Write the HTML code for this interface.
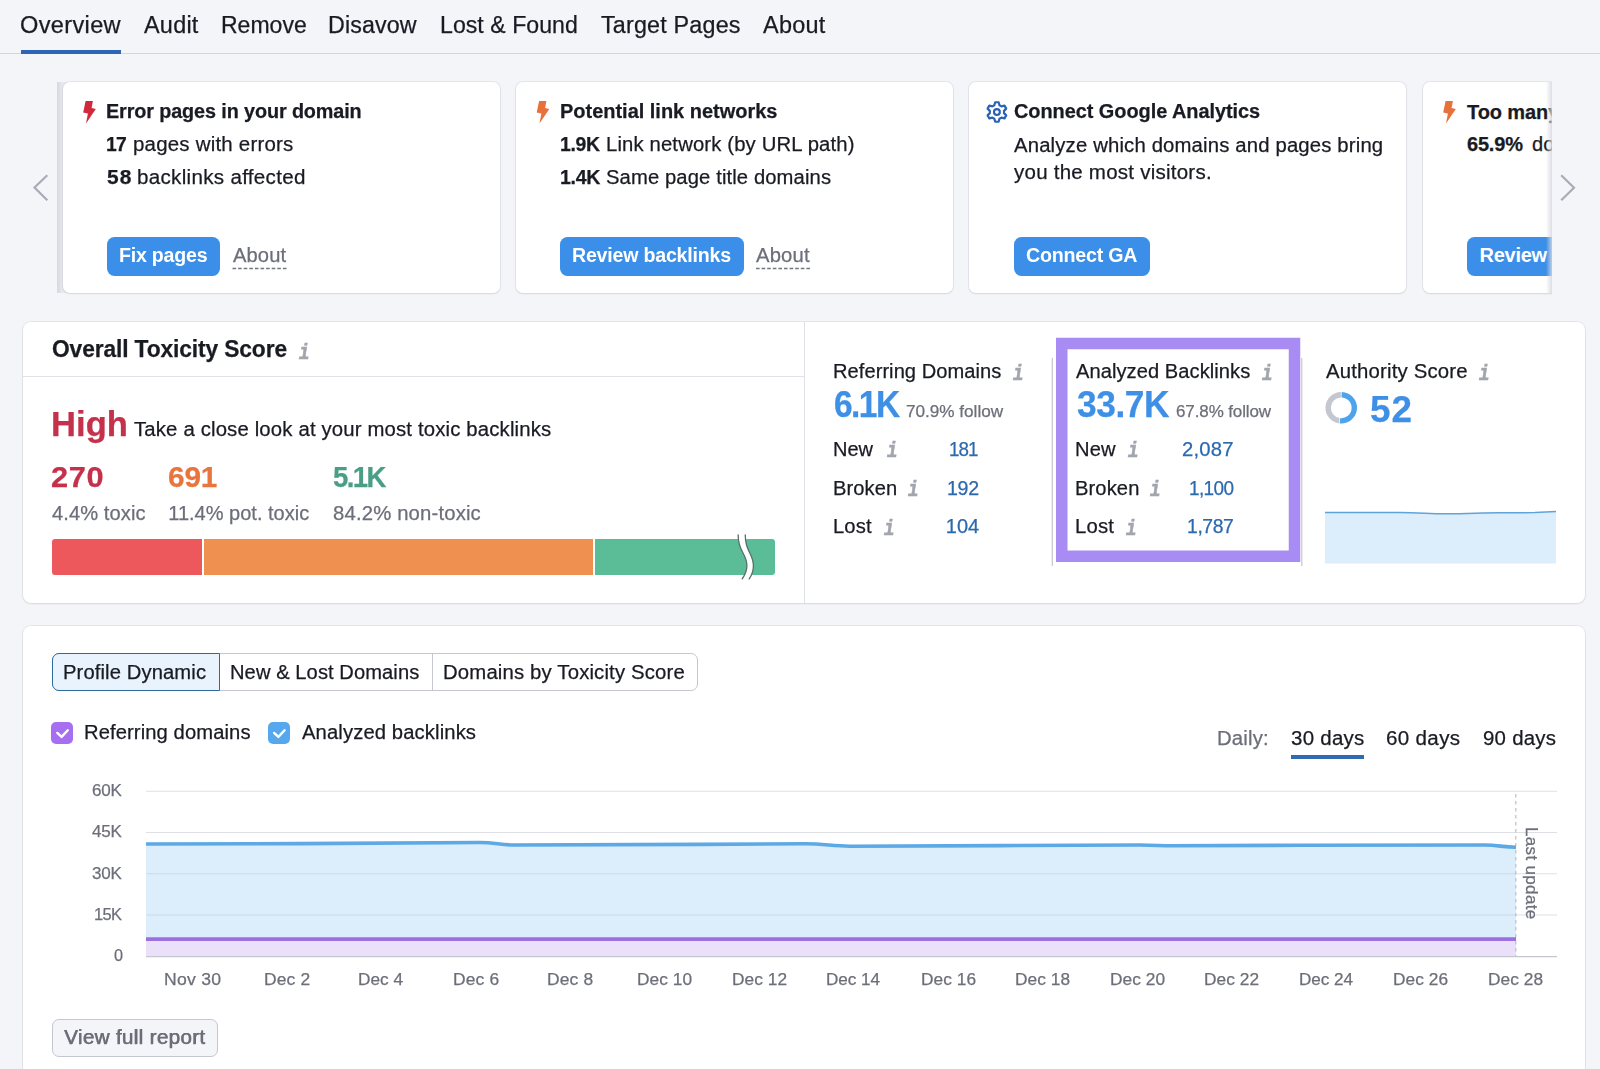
<!DOCTYPE html>
<html lang="en"><head><meta charset="utf-8"><title>Backlink Audit Overview</title>
<style>
html,body{margin:0;padding:0}
body{width:1600px;height:1069px;overflow:hidden;background:#f4f5f9;position:relative;font-family:"Liberation Sans",sans-serif;color:#191b23}
.t{position:absolute;white-space:nowrap;display:block;-webkit-text-stroke:0.25px}
.abs{position:absolute}
.card{position:absolute;top:82px;height:210.5px;width:437px;background:#fff;border-radius:7px;box-shadow:0 0 0 1px rgba(196,199,208,.30),0 1px 2px rgba(25,27,35,.09)}
.btn{position:absolute;top:237px;height:38.5px;background:#3c8fe8;border-radius:7.5px}
.panel{position:absolute;left:23px;width:1562px;background:#fff;border-radius:8px;box-shadow:0 0 0 1px rgba(196,199,208,.32),0 1px 2px rgba(25,27,35,.09)}
</style></head><body>
<!-- NAV -->
<div class="abs" style="left:0;top:52.5px;width:1600px;height:1.5px;background:#d3d6de"></div>
<div class="abs" style="left:21px;top:50px;width:100px;height:3.5px;background:#2b67b6"></div>

<!-- CAROUSEL -->
<svg class="abs" style="left:0;top:0" width="1600" height="320" viewBox="0 0 1600 320">
  <path d="M46.5 176 L34.5 187.5 L46.5 199.5" fill="none" stroke="#a9abb6" stroke-width="2.2" stroke-linecap="square"/>
  <path d="M1562 176 L1574 187.8 L1562 199.5" fill="none" stroke="#a9abb6" stroke-width="2.2" stroke-linecap="square"/>
</svg>
<div class="abs" id="clip" style="left:57px;top:70px;width:1495px;height:240px;overflow:hidden">
 <div class="abs" style="left:-57px;top:-70px;width:1600px;height:320px">
  <div class="abs" style="left:57px;top:82px;width:12px;height:211px;background:linear-gradient(90deg,#d6d8e0,#e9eaef 6px)"></div>
  <div class="card" style="left:62.5px"></div>
  <div class="card" style="left:516px"></div>
  <div class="card" style="left:969px"></div>
  <div class="card" style="left:1422.5px"></div>
  <div class="btn" style="left:107px;width:113px"></div>
  <div class="btn" style="left:560px;width:184px"></div>
  <div class="btn" style="left:1013.5px;width:136.5px"></div>
  <div class="btn" style="left:1467px;width:184px"></div>
  <svg class="abs" style="left:0;top:0" width="1600" height="320" viewBox="0 0 1600 320">
    <polygon points="85.6,101.1 92.9,101.1 91.6,108 95.8,109.1 86,123.4 87.9,113.6 83.2,112.5" fill="#d1283c"/>
    <polygon transform="translate(453.5 0)" points="85.6,101.1 92.9,101.1 91.6,108 95.8,109.1 86,123.4 87.9,113.6 83.2,112.5" fill="#e8703a"/>
    <polygon transform="translate(1360 0)" points="85.6,101.1 92.9,101.1 91.6,108 95.8,109.1 86,123.4 87.9,113.6 83.2,112.5" fill="#e8703a"/>
    <g transform="translate(996.9 112)" fill="none" stroke="#2a62b5" stroke-width="2.2" stroke-linejoin="round">
      <circle r="2.9"/>
      <path d="M-1.72 -9.75 L1.72 -9.75 L2.58 -6.72 L4.53 -5.60 L7.58 -6.36 L9.30 -3.39 L7.11 -1.13 L7.11 1.13 L9.30 3.39 L7.58 6.36 L4.53 5.60 L2.58 6.72 L1.72 9.75 L-1.72 9.75 L-2.58 6.72 L-4.53 5.60 L-7.58 6.36 L-9.30 3.39 L-7.11 1.13 L-7.11 -1.13 L-9.30 -3.39 L-7.58 -6.36 L-4.53 -5.60 L-2.58 -6.72 Z"/>
    </g>
    <line x1="232.5" x2="286.5" y1="268.5" y2="268.5" stroke="#74767f" stroke-width="1.5" stroke-dasharray="3.6 2"/>
    <line x1="756" x2="810.5" y1="268.5" y2="268.5" stroke="#74767f" stroke-width="1.5" stroke-dasharray="3.6 2"/>
  </svg>
  <span class="t" style="left:1467px;top:102px;font-size:20px;line-height:20px;font-weight:700;letter-spacing:-0.1px">Too many follow backlinks</span>
  <span class="t" style="left:1467px;top:134px;font-size:20px;line-height:20px;font-weight:700;letter-spacing:-0.2px">65.9%</span>
  <span class="t" style="left:1532px;top:134px;font-size:20px;line-height:20px;letter-spacing:0.1px">dofollow links</span>
  <span class="t" style="left:1479.5px;top:245px;font-size:20px;line-height:20px;font-weight:700;color:#fff;letter-spacing:-0.25px;-webkit-text-stroke:0">Review backlinks</span>
  <div class="abs" style="left:1546px;top:82px;width:6px;height:211px;background:linear-gradient(90deg,rgba(220,222,229,0),rgba(214,216,224,.85))"></div>
 </div>
</div>

<!-- PANEL 2 -->
<div class="panel" style="top:321.5px;height:281px"></div>
<div class="abs" style="left:23px;top:376px;width:782px;height:1.3px;background:#e0e2e8"></div>
<div class="abs" style="left:804.2px;top:322px;width:1.3px;height:281px;background:#e0e2e8"></div>
<div class="abs" style="left:51.75px;top:538.75px;width:150.5px;height:35.75px;background:#ed585c;border-radius:3px 0 0 3px"></div>
<div class="abs" style="left:203.75px;top:538.75px;width:389.6px;height:35.75px;background:#ef9050"></div>
<div class="abs" style="left:595.3px;top:538.75px;width:179.7px;height:35.75px;background:#5bbd98;border-radius:0 3px 3px 0"></div>
<svg class="abs" style="left:0;top:0" width="1600" height="1069" viewBox="0 0 1600 1069">
  <!-- wavy break -->
  <path d="M738.2 534 L738.2 536 C738.2 552 746.9 553 746.9 566 C746.9 571.5 744.6 575.4 742.2 579.2 L749.2 579.2 C751.6 575.4 753.4 571.5 753.4 566 C753.4 553 745.3 552 745.3 536 L745.3 534 Z" fill="#fff"/>
  <path d="M738.2 534.8 L738.2 536 C738.2 552 746.9 553 746.9 566 C746.9 571.5 744.6 575.4 742.2 578.9" fill="none" stroke="#56706a" stroke-width="1.3" stroke-linecap="round"/>
  <path d="M745.3 534.8 L745.3 536 C745.3 552 753.4 553 753.4 566 C753.4 571.5 751.6 575.4 749.2 578.9" fill="none" stroke="#56706a" stroke-width="1.3" stroke-linecap="round"/>
  <!-- dividers -->
  <line x1="1052.3" x2="1052.3" y1="358" y2="566" stroke="#c4c7cf" stroke-width="1.2"/>
  <line x1="1301.8" x2="1301.8" y1="358" y2="566" stroke="#c4c7cf" stroke-width="1.2"/>
  <!-- purple highlight -->
  <rect x="1061.75" y="343.5" width="232.75" height="212.75" fill="none" stroke="#a98cf3" stroke-width="11.5"/>
  <!-- donut -->
  <g transform="translate(1341.3 407.8)" fill="none" stroke-width="5.4">
    <path d="M0.34 -13.10 A13.1 13.1 0 1 1 -1.37 13.03" stroke="#4da3ec"/>
    <path d="M-2.16 12.92 A13.1 13.1 0 0 1 -0.34 -13.10" stroke="#c4c7cf"/>
  </g>
  <!-- sparkline -->
  <path d="M1325 512.6 L1400 512.6 C1420 512.8 1430 513.8 1445 513.8 C1470 513.8 1480 512.8 1500 512.8 L1535 512.6 L1556 511.6 L1556 563.5 L1325 563.5 Z" fill="#dceefc"/>
  <path d="M1325 512.6 L1400 512.6 C1420 512.8 1430 513.8 1445 513.8 C1470 513.8 1480 512.8 1500 512.8 L1535 512.6 L1556 511.6" fill="none" stroke="#5fa3db" stroke-width="1.5"/>
</svg>

<!-- PANEL 3 -->
<div class="panel" style="top:625.5px;height:460px"></div>
<div class="abs" style="left:51.5px;top:653px;width:646px;height:38px;box-sizing:border-box;border:1.3px solid #c4c7cf;border-radius:7px;background:#fff"></div>
<div class="abs" style="left:431.5px;top:653px;width:1.3px;height:38px;background:#c4c7cf"></div>
<div class="abs" style="left:51.5px;top:653px;width:168px;height:38px;box-sizing:border-box;border:1.7px solid #2c6c9c;border-radius:7px 0 0 7px;background:#e9f3fd"></div>
<div class="abs" style="left:51.25px;top:722px;width:22px;height:22px;border-radius:5px;background:#a56ff0"></div>
<div class="abs" style="left:268px;top:722px;width:22px;height:22px;border-radius:5px;background:#55a8ee"></div>
<div class="abs" style="left:1290.5px;top:755px;width:73.5px;height:4.2px;background:#2e6bb0"></div>
<div class="abs" style="left:51.5px;top:1019px;width:166.5px;height:38px;box-sizing:border-box;border:1.3px solid #c4c7cf;border-radius:7px;background:#f4f5f9"></div>
<svg class="abs" style="left:0;top:0" width="1600" height="1069" viewBox="0 0 1600 1069">
  <path d="M57.3 732.9 L61.6 736.9 L67.8 730.3" fill="none" stroke="#fff" stroke-width="2.4" stroke-linecap="round" stroke-linejoin="round"/>
  <path d="M274.1 732.9 L278.4 736.9 L284.6 730.3" fill="none" stroke="#fff" stroke-width="2.4" stroke-linecap="round" stroke-linejoin="round"/>
  <!-- areas -->
  <path d="M146 844 L300 843.6 L480 842.5 C495 842.5 500 845 514 845 L700 844.4 L805 843.8 C825 843.8 832 846.2 850 846.2 L1000 845.6 L1140 845 C1155 845 1160 845.8 1172 845.8 L1300 845.2 L1485 845 C1498 845 1503 847.2 1516 847.2 L1516 956.3 L146 956.3 Z" fill="#dcedfc"/>
  <path d="M146 939.2 L1516 939.2 L1516 956.3 L146 956.3 Z" fill="#ebe0fa"/>
  <!-- grid -->
  <g stroke="#c9ccd4" stroke-opacity=".6" stroke-width="1.2">
    <line x1="146" x2="1557" y1="791.25" y2="791.25"/>
    <line x1="146" x2="1557" y1="832.5" y2="832.5"/>
    <line x1="146" x2="1557" y1="873.75" y2="873.75"/>
    <line x1="146" x2="1557" y1="915" y2="915"/>
  </g>
  <line x1="146" x2="1557" y1="956.6" y2="956.6" stroke="#c4c7cf" stroke-width="1.4"/>
  <line x1="1515.8" x2="1515.8" y1="794" y2="956" stroke="#bcbfc8" stroke-width="1.2" stroke-dasharray="3.5 3.5"/>
  <path d="M146 844 L300 843.6 L480 842.5 C495 842.5 500 845 514 845 L700 844.4 L805 843.8 C825 843.8 832 846.2 850 846.2 L1000 845.6 L1140 845 C1155 845 1160 845.8 1172 845.8 L1300 845.2 L1485 845 C1498 845 1503 847.2 1516 847.2" fill="none" stroke="#5ca9e6" stroke-width="3.6"/>
  <path d="M146 939.2 L1516 939.2" fill="none" stroke="#9c70e0" stroke-width="3.8"/>
</svg>

<div id="texts" style="will-change:transform">
<span class="t" style="left:19.98px;top:14.00px;font-size:23px;line-height:23px;letter-spacing:0.336px;transform-origin:0 0;transform:scaleX(1.0247);">Overview</span>
<span class="t" style="left:144.00px;top:14.00px;font-size:23px;line-height:23px;letter-spacing:0.244px;transform-origin:0 0;transform:scaleX(1.0184);">Audit</span>
<span class="t" style="left:221.00px;top:14.00px;font-size:23px;line-height:23px;letter-spacing:0.015px;">Remove</span>
<span class="t" style="left:327.99px;top:14.00px;font-size:23px;line-height:23px;letter-spacing:0.141px;transform-origin:0 0;transform:scaleX(1.0098);">Disavow</span>
<span class="t" style="left:440.00px;top:14.00px;font-size:23px;line-height:23px;letter-spacing:0.045px;transform-origin:0 0;transform:scaleX(1.0036);">Lost &amp; Found</span>
<span class="t" style="left:601.00px;top:14.00px;font-size:23px;line-height:23px;letter-spacing:0.179px;transform-origin:0 0;transform:scaleX(1.0146);">Target Pages</span>
<span class="t" style="left:763.00px;top:14.00px;font-size:23px;line-height:23px;letter-spacing:0.283px;transform-origin:0 0;transform:scaleX(1.0186);">About</span>
<span class="t" style="left:106.01px;top:101.00px;font-size:20px;line-height:20px;font-weight:700;letter-spacing:-0.109px;transform-origin:0 0;transform:scaleX(0.9894);">Error pages in your domain</span>
<span class="t" style="left:106.03px;top:134.00px;font-size:20px;line-height:20px;font-weight:700;letter-spacing:-0.698px;transform-origin:0 0;transform:scaleX(0.9670);">17</span>
<span class="t" style="left:132.73px;top:134.00px;font-size:20px;line-height:20px;letter-spacing:0.212px;transform-origin:0 0;transform:scaleX(1.0222);">pages with errors</span>
<span class="t" style="left:107.00px;top:167.00px;font-size:20px;line-height:20px;font-weight:700;letter-spacing:1.039px;transform-origin:0 0;transform:scaleX(1.0470);">58</span>
<span class="t" style="left:137.22px;top:167.00px;font-size:20px;line-height:20px;letter-spacing:0.283px;transform-origin:0 0;transform:scaleX(1.0307);">backlinks affected</span>
<span class="t" style="left:118.52px;top:245.00px;font-size:20px;line-height:20px;font-weight:700;color:#fff;letter-spacing:-0.229px;transform-origin:0 0;transform:scaleX(0.9799);-webkit-text-stroke:0;">Fix pages</span>
<span class="t" style="left:232.50px;top:245.00px;font-size:20px;line-height:20px;color:#6c6e79;letter-spacing:0.099px;transform-origin:0 0;transform:scaleX(1.0075);">About</span>
<span class="t" style="left:559.50px;top:101.00px;font-size:20px;line-height:20px;font-weight:700;letter-spacing:-0.010px;transform-origin:0 0;transform:scaleX(0.9990);">Potential link networks</span>
<span class="t" style="left:559.53px;top:134.00px;font-size:20px;line-height:20px;font-weight:700;letter-spacing:-0.389px;transform-origin:0 0;transform:scaleX(0.9721);">1.9K</span>
<span class="t" style="left:605.99px;top:134.00px;font-size:20px;line-height:20px;letter-spacing:0.136px;transform-origin:0 0;transform:scaleX(1.0141);">Link network (by URL path)</span>
<span class="t" style="left:559.52px;top:167.00px;font-size:20px;line-height:20px;font-weight:700;letter-spacing:-0.304px;transform-origin:0 0;transform:scaleX(0.9782);">1.4K</span>
<span class="t" style="left:606.30px;top:167.00px;font-size:20px;line-height:20px;letter-spacing:0.110px;transform-origin:0 0;transform:scaleX(1.0110);">Same page title domains</span>
<span class="t" style="left:572.02px;top:245.00px;font-size:20px;line-height:20px;font-weight:700;color:#fff;letter-spacing:-0.220px;transform-origin:0 0;transform:scaleX(0.9800);-webkit-text-stroke:0;">Review backlinks</span>
<span class="t" style="left:756.00px;top:245.00px;font-size:20px;line-height:20px;color:#6c6e79;letter-spacing:0.160px;transform-origin:0 0;transform:scaleX(1.0122);">About</span>
<span class="t" style="left:1014.00px;top:101.00px;font-size:20px;line-height:20px;font-weight:700;letter-spacing:-0.045px;transform-origin:0 0;transform:scaleX(0.9959);">Connect Google Analytics</span>
<span class="t" style="left:1014.00px;top:135.00px;font-size:20px;line-height:20px;letter-spacing:0.153px;transform-origin:0 0;transform:scaleX(1.0155);">Analyze which domains and pages bring</span>
<span class="t" style="left:1014.00px;top:162.00px;font-size:20px;line-height:20px;letter-spacing:0.228px;transform-origin:0 0;transform:scaleX(1.0257);">you the most visitors.</span>
<span class="t" style="left:1026.00px;top:245.00px;font-size:20px;line-height:20px;font-weight:700;color:#fff;letter-spacing:-0.231px;transform-origin:0 0;transform:scaleX(0.9820);-webkit-text-stroke:0;">Connect GA</span>
<span class="t" style="left:52.00px;top:338.00px;font-size:23px;line-height:23px;font-weight:700;letter-spacing:-0.116px;transform-origin:0 0;transform:scaleX(0.9898);">Overall Toxicity Score</span>
<span class="t" style="left:51.00px;top:407.00px;font-size:34.5px;line-height:34.5px;font-weight:700;color:#c5304a;letter-spacing:0.038px;transform-origin:0 0;transform:scaleX(1.0016);">High</span>
<span class="t" style="left:133.75px;top:419.00px;font-size:20px;line-height:20px;letter-spacing:0.151px;transform-origin:0 0;transform:scaleX(1.0169);">Take a close look at your most toxic backlinks</span>
<span class="t" style="left:50.97px;top:462.00px;font-size:30px;line-height:30px;font-weight:700;color:#c5304a;letter-spacing:0.649px;transform-origin:0 0;transform:scaleX(1.0268);">270</span>
<span class="t" style="left:168.26px;top:462.00px;font-size:30px;line-height:30px;font-weight:700;color:#e8743e;letter-spacing:-0.155px;transform-origin:0 0;transform:scaleX(0.9936);">691</span>
<span class="t" style="left:333.25px;top:462.00px;font-size:30px;line-height:30px;font-weight:700;color:#4a9e85;letter-spacing:-1.729px;transform-origin:0 0;transform:scaleX(0.9186);">5.1K</span>
<span class="t" style="left:52.00px;top:503.00px;font-size:20px;line-height:20px;color:#6c6e79;letter-spacing:0.068px;transform-origin:0 0;transform:scaleX(1.0067);">4.4% toxic</span>
<span class="t" style="left:168.25px;top:503.00px;font-size:20px;line-height:20px;color:#6c6e79;letter-spacing:0.006px;">11.4% pot. toxic</span>
<span class="t" style="left:333.25px;top:503.00px;font-size:20px;line-height:20px;color:#6c6e79;letter-spacing:0.154px;transform-origin:0 0;transform:scaleX(1.0150);">84.2% non-toxic</span>
<span class="t" style="left:833.00px;top:361.00px;font-size:20px;line-height:20px;letter-spacing:0.049px;transform-origin:0 0;transform:scaleX(1.0047);">Referring Domains</span>
<span class="t" style="left:833.67px;top:387.00px;font-size:36px;line-height:36px;font-weight:700;color:#3e8fe6;letter-spacing:-1.681px;transform-origin:0 0;transform:scaleX(0.9328);">6.1K</span>
<span class="t" style="left:906.30px;top:403.00px;font-size:17.2px;line-height:17.2px;color:#6c6e79;letter-spacing:-0.015px;transform-origin:0 0;transform:scaleX(0.9983);">70.9% follow</span>
<span class="t" style="left:833.00px;top:439.00px;font-size:20px;line-height:20px;letter-spacing:0.008px;">New</span>
<span class="t" style="left:949.36px;top:439.00px;font-size:20px;line-height:20px;color:#2c69ae;letter-spacing:-0.965px;transform-origin:0 0;transform:scaleX(0.9401);">181</span>
<span class="t" style="left:832.99px;top:478.00px;font-size:20px;line-height:20px;letter-spacing:0.075px;transform-origin:0 0;transform:scaleX(1.0061);">Broken</span>
<span class="t" style="left:947.02px;top:478.00px;font-size:20px;line-height:20px;color:#2c69ae;letter-spacing:-0.315px;transform-origin:0 0;transform:scaleX(0.9805);">192</span>
<span class="t" style="left:832.99px;top:516.00px;font-size:20px;line-height:20px;letter-spacing:0.125px;transform-origin:0 0;transform:scaleX(1.0101);">Lost</span>
<span class="t" style="left:945.80px;top:516.00px;font-size:20px;line-height:20px;color:#2c69ae;letter-spacing:-0.012px;">104</span>
<span class="t" style="left:1076.20px;top:361.00px;font-size:20px;line-height:20px;letter-spacing:0.056px;transform-origin:0 0;transform:scaleX(1.0055);">Analyzed Backlinks</span>
<span class="t" style="left:1076.60px;top:387.00px;font-size:36px;line-height:36px;font-weight:700;color:#3e8fe6;letter-spacing:-0.437px;transform-origin:0 0;transform:scaleX(0.9818);">33.7K</span>
<span class="t" style="left:1176.30px;top:403.00px;font-size:17.2px;line-height:17.2px;color:#6c6e79;letter-spacing:-0.107px;transform-origin:0 0;transform:scaleX(0.9880);">67.8% follow</span>
<span class="t" style="left:1074.99px;top:439.00px;font-size:20px;line-height:20px;letter-spacing:0.108px;transform-origin:0 0;transform:scaleX(1.0055);">New</span>
<span class="t" style="left:1182.29px;top:439.00px;font-size:20px;line-height:20px;color:#2c69ae;letter-spacing:0.171px;transform-origin:0 0;transform:scaleX(1.0139);">2,087</span>
<span class="t" style="left:1074.99px;top:478.00px;font-size:20px;line-height:20px;letter-spacing:0.095px;transform-origin:0 0;transform:scaleX(1.0078);">Broken</span>
<span class="t" style="left:1188.65px;top:478.00px;font-size:20px;line-height:20px;color:#2c69ae;letter-spacing:-0.632px;transform-origin:0 0;transform:scaleX(0.9483);">1,100</span>
<span class="t" style="left:1074.98px;top:516.00px;font-size:20px;line-height:20px;letter-spacing:0.191px;transform-origin:0 0;transform:scaleX(1.0154);">Lost</span>
<span class="t" style="left:1186.83px;top:516.00px;font-size:20px;line-height:20px;color:#2c69ae;letter-spacing:-0.397px;transform-origin:0 0;transform:scaleX(0.9675);">1,787</span>
<span class="t" style="left:1325.70px;top:361.00px;font-size:20px;line-height:20px;letter-spacing:0.173px;transform-origin:0 0;transform:scaleX(1.0178);">Authority Score</span>
<span class="t" style="left:1369.78px;top:392.00px;font-size:36px;line-height:36px;font-weight:700;color:#3e8fe6;letter-spacing:0.879px;transform-origin:0 0;transform:scaleX(1.0231);">52</span>
<span class="t" style="left:63.24px;top:662.00px;font-size:20px;line-height:20px;letter-spacing:0.105px;transform-origin:0 0;transform:scaleX(1.0106);">Profile Dynamic</span>
<span class="t" style="left:230.24px;top:662.00px;font-size:20px;line-height:20px;letter-spacing:0.074px;transform-origin:0 0;transform:scaleX(1.0067);">New &amp; Lost Domains</span>
<span class="t" style="left:442.98px;top:662.00px;font-size:20px;line-height:20px;letter-spacing:0.157px;transform-origin:0 0;transform:scaleX(1.0162);">Domains by Toxicity Score</span>
<span class="t" style="left:83.99px;top:722.00px;font-size:20px;line-height:20px;letter-spacing:0.096px;transform-origin:0 0;transform:scaleX(1.0095);">Referring domains</span>
<span class="t" style="left:302.00px;top:722.00px;font-size:20px;line-height:20px;letter-spacing:0.114px;transform-origin:0 0;transform:scaleX(1.0114);">Analyzed backlinks</span>
<span class="t" style="left:1216.98px;top:728.00px;font-size:20px;line-height:20px;color:#6c6e79;letter-spacing:0.153px;transform-origin:0 0;transform:scaleX(1.0162);">Daily:</span>
<span class="t" style="left:1290.50px;top:728.00px;font-size:20px;line-height:20px;letter-spacing:0.264px;transform-origin:0 0;transform:scaleX(1.0226);">30 days</span>
<span class="t" style="left:1385.97px;top:728.00px;font-size:20px;line-height:20px;letter-spacing:0.325px;transform-origin:0 0;transform:scaleX(1.0282);">60 days</span>
<span class="t" style="left:1483.25px;top:728.00px;font-size:20px;line-height:20px;letter-spacing:0.243px;transform-origin:0 0;transform:scaleX(1.0208);">90 days</span>
<span class="t" style="left:92.25px;top:782.00px;font-size:17.2px;line-height:17.2px;color:#6c6e79;letter-spacing:-0.155px;transform-origin:0 0;transform:scaleX(0.9900);">60K</span>
<span class="t" style="left:92.25px;top:823.00px;font-size:17.2px;line-height:17.2px;color:#6c6e79;letter-spacing:-0.155px;transform-origin:0 0;transform:scaleX(0.9900);">45K</span>
<span class="t" style="left:92.25px;top:865.00px;font-size:17.2px;line-height:17.2px;color:#6c6e79;letter-spacing:-0.155px;transform-origin:0 0;transform:scaleX(0.9900);">30K</span>
<span class="t" style="left:94.29px;top:906.00px;font-size:17.2px;line-height:17.2px;color:#6c6e79;letter-spacing:-0.669px;transform-origin:0 0;transform:scaleX(0.9556);">15K</span>
<span class="t" style="left:114.25px;top:947.00px;font-size:17.2px;line-height:17.2px;color:#6c6e79;transform-origin:0 0;transform:scaleX(0.9444);">0</span>
<span class="t" style="left:163.83px;top:971.00px;font-size:17.2px;line-height:17.2px;color:#6c6e79;letter-spacing:0.257px;transform-origin:0 0;transform:scaleX(1.0243);">Nov 30</span>
<span class="t" style="left:263.84px;top:971.00px;font-size:17.2px;line-height:17.2px;color:#6c6e79;letter-spacing:0.144px;transform-origin:0 0;transform:scaleX(1.0133);">Dec 2</span>
<span class="t" style="left:358.35px;top:971.00px;font-size:17.2px;line-height:17.2px;color:#6c6e79;letter-spacing:0.020px;transform-origin:0 0;transform:scaleX(1.0018);">Dec 4</span>
<span class="t" style="left:452.84px;top:971.00px;font-size:17.2px;line-height:17.2px;color:#6c6e79;letter-spacing:0.144px;transform-origin:0 0;transform:scaleX(1.0133);">Dec 6</span>
<span class="t" style="left:547.34px;top:971.00px;font-size:17.2px;line-height:17.2px;color:#6c6e79;letter-spacing:0.144px;transform-origin:0 0;transform:scaleX(1.0133);">Dec 8</span>
<span class="t" style="left:637.34px;top:971.00px;font-size:17.2px;line-height:17.2px;color:#6c6e79;letter-spacing:0.060px;transform-origin:0 0;transform:scaleX(1.0057);">Dec 10</span>
<span class="t" style="left:731.84px;top:971.00px;font-size:17.2px;line-height:17.2px;color:#6c6e79;letter-spacing:0.060px;transform-origin:0 0;transform:scaleX(1.0057);">Dec 12</span>
<span class="t" style="left:826.35px;top:971.00px;font-size:17.2px;line-height:17.2px;color:#6c6e79;letter-spacing:-0.040px;transform-origin:0 0;transform:scaleX(0.9963);">Dec 14</span>
<span class="t" style="left:920.84px;top:971.00px;font-size:17.2px;line-height:17.2px;color:#6c6e79;letter-spacing:0.060px;transform-origin:0 0;transform:scaleX(1.0057);">Dec 16</span>
<span class="t" style="left:1015.34px;top:971.00px;font-size:17.2px;line-height:17.2px;color:#6c6e79;letter-spacing:0.060px;transform-origin:0 0;transform:scaleX(1.0057);">Dec 18</span>
<span class="t" style="left:1109.84px;top:971.00px;font-size:17.2px;line-height:17.2px;color:#6c6e79;letter-spacing:0.060px;transform-origin:0 0;transform:scaleX(1.0057);">Dec 20</span>
<span class="t" style="left:1204.34px;top:971.00px;font-size:17.2px;line-height:17.2px;color:#6c6e79;letter-spacing:0.060px;transform-origin:0 0;transform:scaleX(1.0057);">Dec 22</span>
<span class="t" style="left:1298.85px;top:971.00px;font-size:17.2px;line-height:17.2px;color:#6c6e79;letter-spacing:-0.040px;transform-origin:0 0;transform:scaleX(0.9963);">Dec 24</span>
<span class="t" style="left:1393.34px;top:971.00px;font-size:17.2px;line-height:17.2px;color:#6c6e79;letter-spacing:0.060px;transform-origin:0 0;transform:scaleX(1.0057);">Dec 26</span>
<span class="t" style="left:1487.84px;top:971.00px;font-size:17.2px;line-height:17.2px;color:#6c6e79;letter-spacing:0.060px;transform-origin:0 0;transform:scaleX(1.0057);">Dec 28</span>
<span class="t" style="left:64.00px;top:1027.00px;font-size:20px;line-height:20px;color:#6c6e79;letter-spacing:0.300px;transform-origin:0 0;transform:scaleX(1.0340);text-shadow:0.5px 0 0 #6c6e79;">View full report</span>
<span class="t" style="left:1540.00px;top:827.27px;font-size:16.5px;line-height:16.5px;color:#6c6e79;letter-spacing:0.292px;transform-origin:0 0;transform:rotate(90deg) scaleX(1.0343);">Last update</span>
<span class="t" style="left:298.71px;top:343.00px;font-size:22px;line-height:22px;font-weight:700;color:#a3a5ae;font-family:'Liberation Mono',monospace;transform-origin:0 0;transform:scaleX(0.7917);font-style:italic;-webkit-text-stroke:0.7px #a3a5ae;">i</span>
<span class="t" style="left:1012.71px;top:364.00px;font-size:22px;line-height:22px;font-weight:700;color:#a3a5ae;font-family:'Liberation Mono',monospace;transform-origin:0 0;transform:scaleX(0.7917);font-style:italic;-webkit-text-stroke:0.7px #a3a5ae;">i</span>
<span class="t" style="left:886.61px;top:441.00px;font-size:22px;line-height:22px;font-weight:700;color:#a3a5ae;font-family:'Liberation Mono',monospace;transform-origin:0 0;transform:scaleX(0.7917);font-style:italic;-webkit-text-stroke:0.7px #a3a5ae;">i</span>
<span class="t" style="left:908.11px;top:480.00px;font-size:22px;line-height:22px;font-weight:700;color:#a3a5ae;font-family:'Liberation Mono',monospace;transform-origin:0 0;transform:scaleX(0.7917);font-style:italic;-webkit-text-stroke:0.7px #a3a5ae;">i</span>
<span class="t" style="left:884.01px;top:519.00px;font-size:22px;line-height:22px;font-weight:700;color:#a3a5ae;font-family:'Liberation Mono',monospace;transform-origin:0 0;transform:scaleX(0.7917);font-style:italic;-webkit-text-stroke:0.7px #a3a5ae;">i</span>
<span class="t" style="left:1262.01px;top:364.00px;font-size:22px;line-height:22px;font-weight:700;color:#a3a5ae;font-family:'Liberation Mono',monospace;transform-origin:0 0;transform:scaleX(0.7917);font-style:italic;-webkit-text-stroke:0.7px #a3a5ae;">i</span>
<span class="t" style="left:1128.21px;top:441.00px;font-size:22px;line-height:22px;font-weight:700;color:#a3a5ae;font-family:'Liberation Mono',monospace;transform-origin:0 0;transform:scaleX(0.7917);font-style:italic;-webkit-text-stroke:0.7px #a3a5ae;">i</span>
<span class="t" style="left:1150.21px;top:480.00px;font-size:22px;line-height:22px;font-weight:700;color:#a3a5ae;font-family:'Liberation Mono',monospace;transform-origin:0 0;transform:scaleX(0.7917);font-style:italic;-webkit-text-stroke:0.7px #a3a5ae;">i</span>
<span class="t" style="left:1126.41px;top:519.00px;font-size:22px;line-height:22px;font-weight:700;color:#a3a5ae;font-family:'Liberation Mono',monospace;transform-origin:0 0;transform:scaleX(0.7917);font-style:italic;-webkit-text-stroke:0.7px #a3a5ae;">i</span>
<span class="t" style="left:1479.41px;top:364.00px;font-size:22px;line-height:22px;font-weight:700;color:#a3a5ae;font-family:'Liberation Mono',monospace;transform-origin:0 0;transform:scaleX(0.7917);font-style:italic;-webkit-text-stroke:0.7px #a3a5ae;">i</span>
</div>

</body></html>
